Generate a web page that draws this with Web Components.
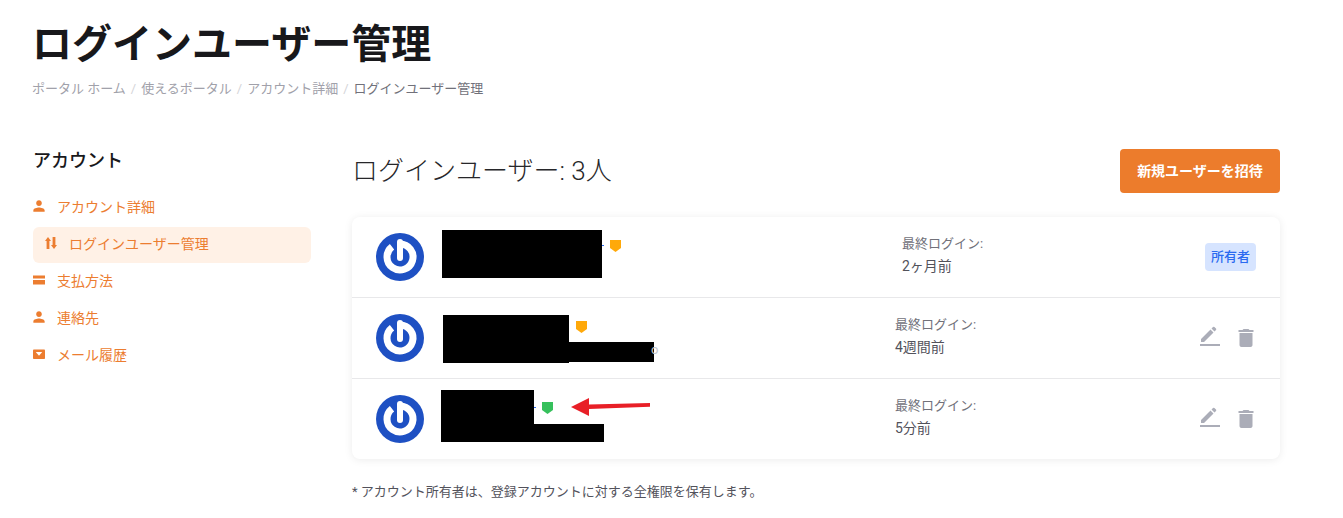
<!DOCTYPE html>
<html lang="ja"><head><meta charset="utf-8"><title>ログインユーザー管理</title>
<style>
html,body{margin:0;background:#fff;height:518px;overflow:hidden}
body{font-family:Roboto,"Noto Sans CJK JP",sans-serif;color:#18181b}
</style></head><body>
<account-page>
  <page-header slot="header" title-text="ログインユーザー管理">
    <crumb-link>ポータル ホーム</crumb-link><crumb-link>使えるポータル</crumb-link><crumb-link>アカウント詳細</crumb-link><crumb-link current>ログインユーザー管理</crumb-link>
  </page-header>
  <side-nav slot="side" heading="アカウント">
    <nav-item icon="person">アカウント詳細</nav-item>
    <nav-item icon="swap" active>ログインユーザー管理</nav-item>
    <nav-item icon="card">支払方法</nav-item>
    <nav-item icon="person">連絡先</nav-item>
    <nav-item icon="mail">メール履歴</nav-item>
  </side-nav>
  <users-panel slot="main" heading="ログインユーザー: 3人" action="新規ユーザーを招待" note="* アカウント所有者は、登録アカウントに対する全権限を保有します。">
    <user-row name-width="168" shield="#ffa90a" last="2ヶ月前" role="owner" masks="442,13,160,48" tick="250"></user-row>
    <user-row name-width="134" shield="#ffa90a" last="4週間前" masks="443,17,126,48;569,44,85,20" tail="1"></user-row>
    <user-row name-width="100" shield="#36c05c" last="5分前" masks="441,11,93,52;534,45,70,18" tick="182" arrow="1"></user-row>
  </users-panel>
</account-page>
<script>
const icons={
person:'<svg width="12" height="12" viewBox="3.500 3.500 17 17" fill="currentColor"><path d="M12 12c2.210 0 4-1.790 4-4s-1.790-4-4-4-4 1.790-4 4 1.790 4 4 4zm0 2c-2.670 0-8 1.340-8 4v2h16v-2c0-2.660-5.330-4-8-4z"/></svg>',
swap:'<svg width="12" height="12" viewBox="0 0 12 12" fill="currentColor"><path d="M3 0 6 4H4.400v8H1.600V4H0zM9 12 6 8h1.600V0h2.800v8H12z"/></svg>',
card:'<svg width="12" height="12" viewBox="0 0 12 12" fill="currentColor"><path d="M0 1.500h12v3H0zM0 6h12v4.500H0z"/></svg>',
mail:'<svg width="12" height="12" viewBox="0 0 12 12"><rect y="1.500" width="12" height="9.500" rx=".8" fill="currentColor"/><path d="M2.800 4h6.400L6 7.800z" fill="#fff"/></svg>'};
function def(name,css,html){
  customElements.define(name,class extends HTMLElement{
    connectedCallback(){
      if(this.shadowRoot)return;
      const r=this.attachShadow({mode:'open'});
      r.innerHTML='<style>'+css+'</style>'+(typeof html==='function'?html(this):html);
    }
  });
}
def('account-page',
`:host{display:block;padding:17px 63px 0 33px;width:1247px}
.cols{display:grid;grid-template-columns:278px 928px;column-gap:41px;margin-top:50px}`,
`<slot name="header"></slot><div class="cols"><slot name="side"></slot><slot name="main"></slot></div>`);
def('page-header',
`:host{display:block}
h1{margin:0 0 0 -1px;font:700 40px/56px Roboto,"Noto Sans CJK JP",sans-serif;color:#18181b}
nav{display:flex;margin-top:6px;font-size:13px;line-height:20px;margin-left:-1px}`,
t=>`<h1>${t.getAttribute('title-text')}</h1><nav><slot></slot></nav>`);
def('crumb-link',
`:host{display:flex;color:#a1a1aa}
:host([current]){color:#71717a}
:host(:not(:first-child))::before{content:"/";color:#d4d4d8;margin:0 5px}`,
`<slot></slot>`);
def('side-nav',
`:host{display:block}
h2{margin:-1px 0 14px;font:500 18px/26px Roboto,"Noto Sans CJK JP",sans-serif;color:#18181b}
.list{display:flex;flex-direction:column;gap:1px}`,
t=>`<h2>${t.getAttribute('heading')}</h2><div class="list"><slot></slot></div>`);
def('nav-item',
`:host{display:flex;align-items:center;gap:12px;height:36px;box-sizing:border-box;font-size:14px;color:#ec7d30;border-radius:6px}
:host([active]){background:#fff1e6;padding:0 0 4px 12px;margin:2px 0 -2px}
svg{display:block}`,
t=>icons[t.getAttribute('icon')]+`<slot></slot>`);
def('users-panel',
`:host{display:block}
header{display:flex;justify-content:space-between;align-items:center;height:44px;margin-bottom:24px}
h2{margin:0;font:300 26px/34px Roboto,"Noto Sans CJK JP",sans-serif;color:#27272a}
button{width:160px;height:44px;border:0;border-radius:4px;background:#ec7c2c;color:#fff;font:700 14px/20px Roboto,"Noto Sans CJK JP",sans-serif;padding:0}
.card{background:#fff;border-radius:8px;box-shadow:0 1px 8px rgba(0,0,0,.08)}
::slotted(user-row:not(:last-child)){border-bottom:1px solid #e8e8ea}
p{margin:23px 0 0;font-size:13px;line-height:20px;color:#52525b}`,
t=>`<header><h2>${t.getAttribute('heading')}</h2><button>${t.getAttribute('action')}</button></header><div class="card"><slot></slot></div><p>${t.getAttribute('note')}</p>`);
const pencil='<svg width="24" height="24" viewBox="0 0 24 24" fill="#abadb8"><path d="M2 18h20v2H2zM3 16v-3l9.500-9.500 3 3L6 16zM13.500 2.500 15 1a1 1 0 0 1 1.400 0L18 2.600A1 1 0 0 1 18 4l-1.500 1.500z"/></svg>';
const trash='<svg width="24" height="24" viewBox="0 0 24 24" fill="#abadb8"><path d="M5.500 19c0 1.100.9 2 2 2h9c1.100 0 2-.9 2-2V7h-13zM19.500 4H15.500l-1-1h-5l-1 1H4.500v2h15z"/></svg>';
const avatar='<svg class="avatar" width="48" height="48" viewBox="0 0 48 48"><circle cx="24" cy="24" r="24" fill="#1e50c3"/><path d="M24 11A13 13 0 1 1 16 13.760" fill="none" stroke="#fff" stroke-width="7"/><path d="M24 9v16" stroke="#fff" stroke-width="6" stroke-linecap="round"/></svg>';
def('user-row',
`:host{display:flex;align-items:center;position:relative;height:80px;padding:0 22px 0 24px}
.id{flex:1;margin-left:18px}
.line{display:flex;align-items:center;height:22px}
.name{height:22px}
.shield{display:block}
.spacer{height:22px}
.login{width:303px;font-size:14px;line-height:22px;color:#52525b;margin-top:-4px}
.login div:first-child{font-size:13px;color:#71717a}
.badge{background:#d6e4ff;color:#2a6af0;font-size:13px;font-weight:500;line-height:28px;padding:0 6px;border-radius:4px;margin-right:2px}
.actions{display:flex;gap:12px}
.actions svg{display:block}
.mask{position:absolute;background:#000}
.tick{position:absolute;top:28px;width:2px;height:1px;background:#2a6af0}
.tail{position:absolute;left:299px;top:44px;font-size:13px;line-height:16px;color:#c4c8d0}
.arrow{position:absolute;left:218px;top:17px}`,
t=>{
  const g=a=>t.getAttribute(a);
  const masks=g('masks').split(';').map(m=>{const[x,y,w,h]=m.split(',');return `<div class="mask" style="left:${x-352}px;top:${y}px;width:${w}px;height:${h}px"></div>`}).join('');
  return avatar+`<div class="id"><div class="line"><span class="name" style="width:${g('name-width')}px"></span><svg class="shield" width="11" height="12" viewBox="0 0 11 12"><path d="M0 0h11v8l-5.500 4L0 8z" fill="${g('shield')}"/></svg></div><div class="spacer"></div></div>`
  +`<div class="login"><div>最終ログイン:</div><div>${g('last')}</div></div>`
  +(g('role')==='owner'?`<span class="badge">所有者</span>`:`<div class="actions">${pencil}${trash}</div>`)
  +masks
  +(g('tick')?`<div class="tick" style="left:${g('tick')}px"></div>`:'')
  +(g('tail')?`<span class="tail">o</span>`:'')
  +(g('arrow')?`<svg class="arrow" width="82" height="22" viewBox="0 0 82 22"><path d="M1 11 19 2v6.500L80 7v3.800L19 13v7z" fill="#e81f27"/></svg>`:'');
});
</script>
</body></html>
